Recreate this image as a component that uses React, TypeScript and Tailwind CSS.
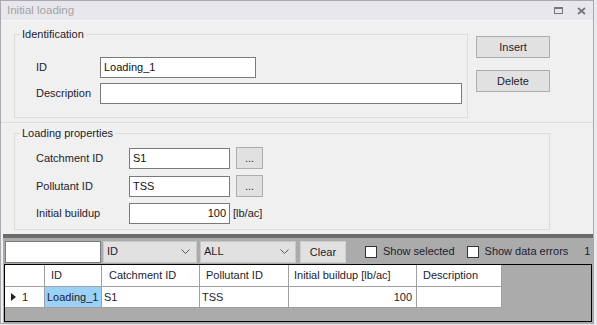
const input = 'h-[21px] shrink-0 bg-white border border-[#7a7a7a] px-[3px] leading-[19px] text-[#111]';
const button = 'h-[22px] shrink-0 bg-[#e1e1e1] border border-[#adadad] leading-[20px] text-center';

function Chevron() {
  return (
    <svg width="9" height="5" viewBox="0 0 9 5" className="shrink-0">
      <path d="M0.5 0.5 L4.5 4.5 L8.5 0.5" fill="none" stroke="#555" strokeWidth="1" />
    </svg>
  );
}

function Combo({ value, width }: { value: string; width: string }) {
  return (
    <div className={`${width} h-[22px] bg-[#e1e1e1] border border-[#c8c8c8] flex items-center justify-between pl-[3px] pr-[6px]`}>
      <span>{value}</span>
      <Chevron />
    </div>
  );
}

function Checkbox({ label }: { label: string }) {
  return (
    <div className="flex items-center">
      <span className="w-[12px] h-[12px] shrink-0 bg-white border border-[#333]" />
      <span className="ml-[6px]">{label}</span>
    </div>
  );
}

export default function App() {
  return (
    <div className="w-[597px] h-[325px] bg-[#e9e9ee] font-['Liberation_Sans',sans-serif] text-[11px] text-[#1c1c30]">
      <div className="w-[594px] h-[324px] border border-[#a8a8b0] bg-[#f0f0f0] flex flex-col">
        <div className="h-[20px] shrink-0 bg-[#e8e8ec] border-b border-[#f6f6f6] flex items-center pl-[6px] pr-[7px]">
          <span className="text-[#a3a3a3] text-[11.5px]">Initial loading</span>
          <div className="ml-auto flex items-center gap-[14px]">
            <svg width="9" height="7" viewBox="0 0 9 7">
              <rect x="0.5" y="0.5" width="8" height="6" fill="none" stroke="#75757c" strokeWidth="1" />
              <rect x="0" y="0" width="9" height="2" fill="#75757c" />
            </svg>
            <svg width="9" height="8" viewBox="0 0 9 8">
              <path d="M1 1 L8 7 M8 1 L1 7" stroke="#75757c" strokeWidth="1.8" />
            </svg>
          </div>
        </div>

        <div className="flex pl-[13px] pt-[6px]">
          <fieldset className="w-[454px] h-[91px] border border-[#dcdcdc]">
            <legend className="ml-[5px] px-[2px] leading-[14px]">Identification</legend>
            <div className="pl-[21px] pt-[16px] flex flex-col gap-[5px]">
              <div className="flex items-center">
                <span className="w-[64px]">ID</span>
                <div className={`${input} w-[156px]`}>Loading_1</div>
              </div>
              <div className="flex items-center">
                <span className="w-[64px]">Description</span>
                <div className={`${input} w-[362px]`} />
              </div>
            </div>
          </fieldset>
          <div className="ml-[8px] mt-[9px] flex flex-col gap-[12px]">
            <button className={`${button} w-[74px]`}>Insert</button>
            <button className={`${button} w-[74px]`}>Delete</button>
          </div>
        </div>

        <div className="mt-[4px] h-px bg-[#dcdcdc]" />

        <div className="pl-[13px] pt-[3px]">
          <fieldset className="w-[536px] h-[104px] border border-[#dcdcdc]">
            <legend className="ml-[5px] px-[2px] leading-[14px]">Loading properties</legend>
            <div className="pl-[21px] pt-[7px] flex flex-col">
              <div className="flex items-center">
                <span className="w-[93px]">Catchment ID</span>
                <div className={`${input} w-[101px]`}>S1</div>
                <button className={`${button} w-[27px] ml-[6px]`}>...</button>
              </div>
              <div className="flex items-center mt-[6px]">
                <span className="w-[93px]">Pollutant ID</span>
                <div className={`${input} w-[101px]`}>TSS</div>
                <button className={`${button} w-[27px] ml-[6px]`}>...</button>
              </div>
              <div className="flex items-center h-[22px] mt-[5px]">
                <span className="w-[93px]">Initial buildup</span>
                <div className={`${input} w-[101px] text-right`}>100</div>
                <span className="ml-[3px]">[lb/ac]</span>
              </div>
            </div>
          </fieldset>
        </div>

        <div className="mt-[4px] ml-[2px] flex-1 flex flex-col bg-[#ababab] overflow-hidden">
          <div className="h-[4px] shrink-0 bg-[#6b6b6b]" />
          <div className="h-[26px] shrink-0 flex items-center pl-[2px] pt-[1px] whitespace-nowrap [&>*]:shrink-0">
            <div className="w-[96px] h-[22px] bg-white border border-[#7a7a7a]" />
            <div className="ml-[2px]"><Combo value="ID" width="w-[94px]" /></div>
            <div className="ml-[3px]"><Combo value="ALL" width="w-[96px]" /></div>
            <button className={`${button} w-[46px] ml-[4px] border-[#d0d0d0]`}>Clear</button>
            <div className="ml-[19px]"><Checkbox label="Show selected" /></div>
            <div className="ml-[12px]"><Checkbox label="Show data errors" /></div>
            <span className="ml-[16px]">1</span>
          </div>
          <div className="mx-[1px] h-[58px] shrink-0 border border-black">
            <div className="flex h-[22px] bg-[#ababab]">
              <div className="w-[40px] bg-white border-r border-b border-[#a0a0a0]" />
              <div className="w-[57px] bg-white border-r border-b border-[#a0a0a0] pl-[6px] leading-[21px]">ID</div>
              <div className="w-[98px] bg-white border-r border-b border-[#a0a0a0] pl-[7px] leading-[21px]">Catchment ID</div>
              <div className="w-[89px] bg-white border-r border-b border-[#a0a0a0] pl-[6px] leading-[21px]">Pollutant ID</div>
              <div className="w-[128px] bg-white border-r border-b border-[#a0a0a0] pl-[5px] leading-[21px]">Initial buildup [lb/ac]</div>
              <div className="w-[85px] bg-white border-r border-b border-[#a0a0a0] pl-[6px] leading-[21px]">Description</div>
            </div>
            <div className="flex h-[21px]">
              <div className="w-[40px] bg-white border-r border-b border-[#a0a0a0] flex items-center pl-[6px]">
                <svg width="5" height="8" viewBox="0 0 5 8">
                  <path d="M0 0 L5 4 L0 8 Z" fill="#222" />
                </svg>
                <span className="ml-[6px]">1</span>
              </div>
              <div className="w-[57px] bg-[#99d1f7] border-r border-b border-[#a0a0a0] pl-[2px] leading-[20px]">Loading_1</div>
              <div className="w-[98px] bg-white border-r border-b border-[#a0a0a0] pl-[2px] leading-[20px]">S1</div>
              <div className="w-[89px] bg-white border-r border-b border-[#a0a0a0] pl-[2px] leading-[20px]">TSS</div>
              <div className="w-[128px] bg-white border-r border-b border-[#a0a0a0] pr-[4px] text-right leading-[20px]">100</div>
              <div className="w-[85px] bg-white border-r border-b border-[#a0a0a0]" />
            </div>
          </div>
        </div>
      </div>
    </div>
  );
}
